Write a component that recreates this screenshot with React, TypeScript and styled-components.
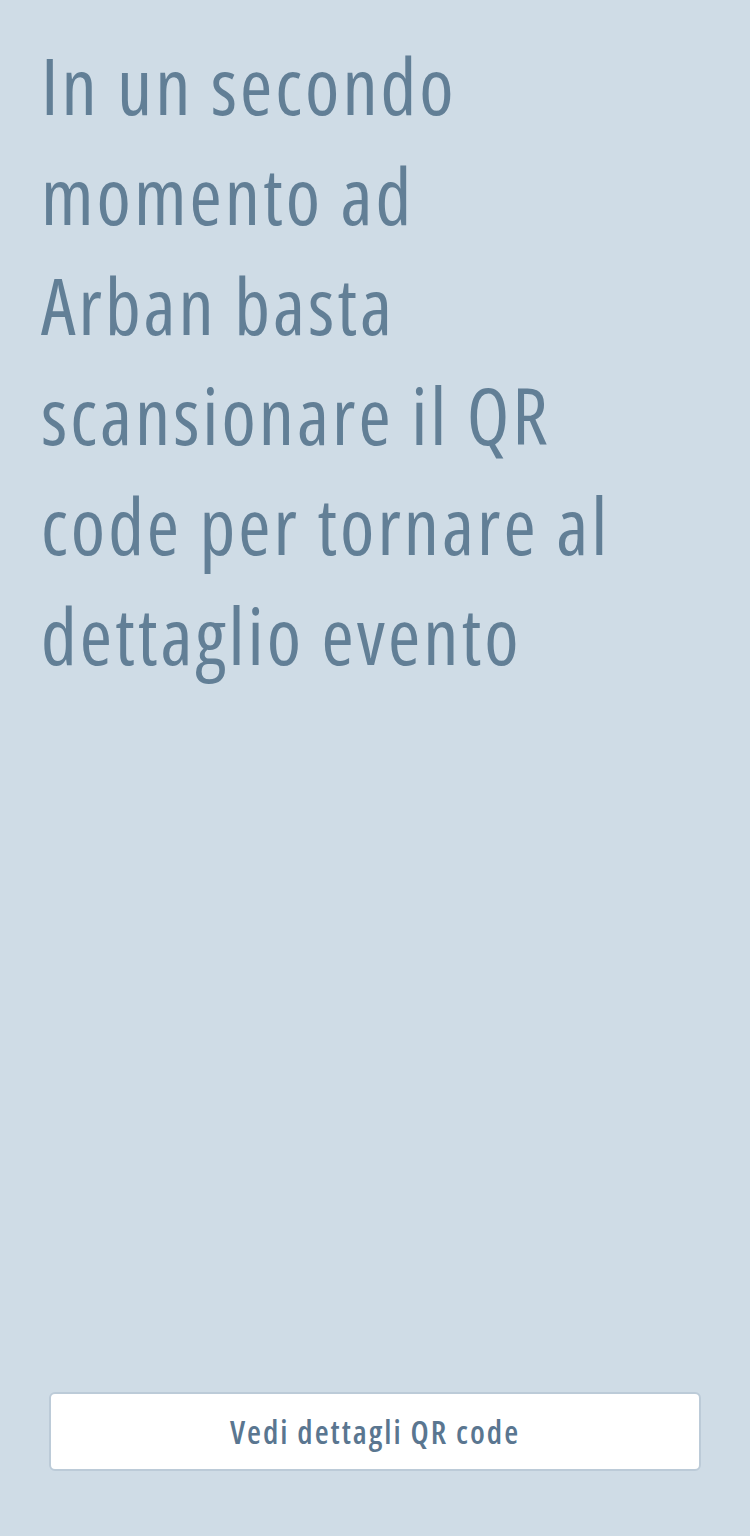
import React from 'react';
import styled, { createGlobalStyle } from 'styled-components';

const GlobalStyle = createGlobalStyle`
  html, body {
    margin: 0;
    padding: 0;
    background: #cfdce6;
  }
  * {
    box-sizing: border-box;
  }
`;

const Screen = styled.main`
  display: flex;
  flex-direction: column;
  min-height: 1536px;
  padding: 30px 49px 65px 41px;
  background: #cfdce6;
  font-family: 'Open Sans', sans-serif;
  font-stretch: 75%;
`;

const Message = styled.h1`
  margin: 0;
  font-size: 78px;
  line-height: 110px;
  font-weight: 400;
  color: #627f96;
  letter-spacing: 3px;
`;

const Line = styled.span`
  display: block;
  white-space: nowrap;
`;

const Footer = styled.div`
  margin-top: auto;
  padding-left: 8px;
`;

const GhostButton = styled.button`
  display: flex;
  align-items: center;
  justify-content: center;
  width: 100%;
  height: 79px;
  background: #ffffff;
  border: 2px solid #bccbd8;
  border-radius: 6px;
  font-family: inherit;
  font-stretch: 75%;
  font-size: 32px;
  font-weight: 600;
  letter-spacing: 2px;
  color: #5a7690;
  cursor: pointer;
`;

const lines = [
  'In un secondo',
  'momento ad',
  'Arban basta',
  'scansionare il QR',
  'code per tornare al',
  'dettaglio evento',
];

export default function App() {
  return (
    <>
      <GlobalStyle />
      <Screen>
        <Message>
          {lines.map((line) => (
            <Line key={line}>{line}</Line>
          ))}
        </Message>
        <Footer>
          <GhostButton>Vedi dettagli QR code</GhostButton>
        </Footer>
      </Screen>
    </>
  );
}
